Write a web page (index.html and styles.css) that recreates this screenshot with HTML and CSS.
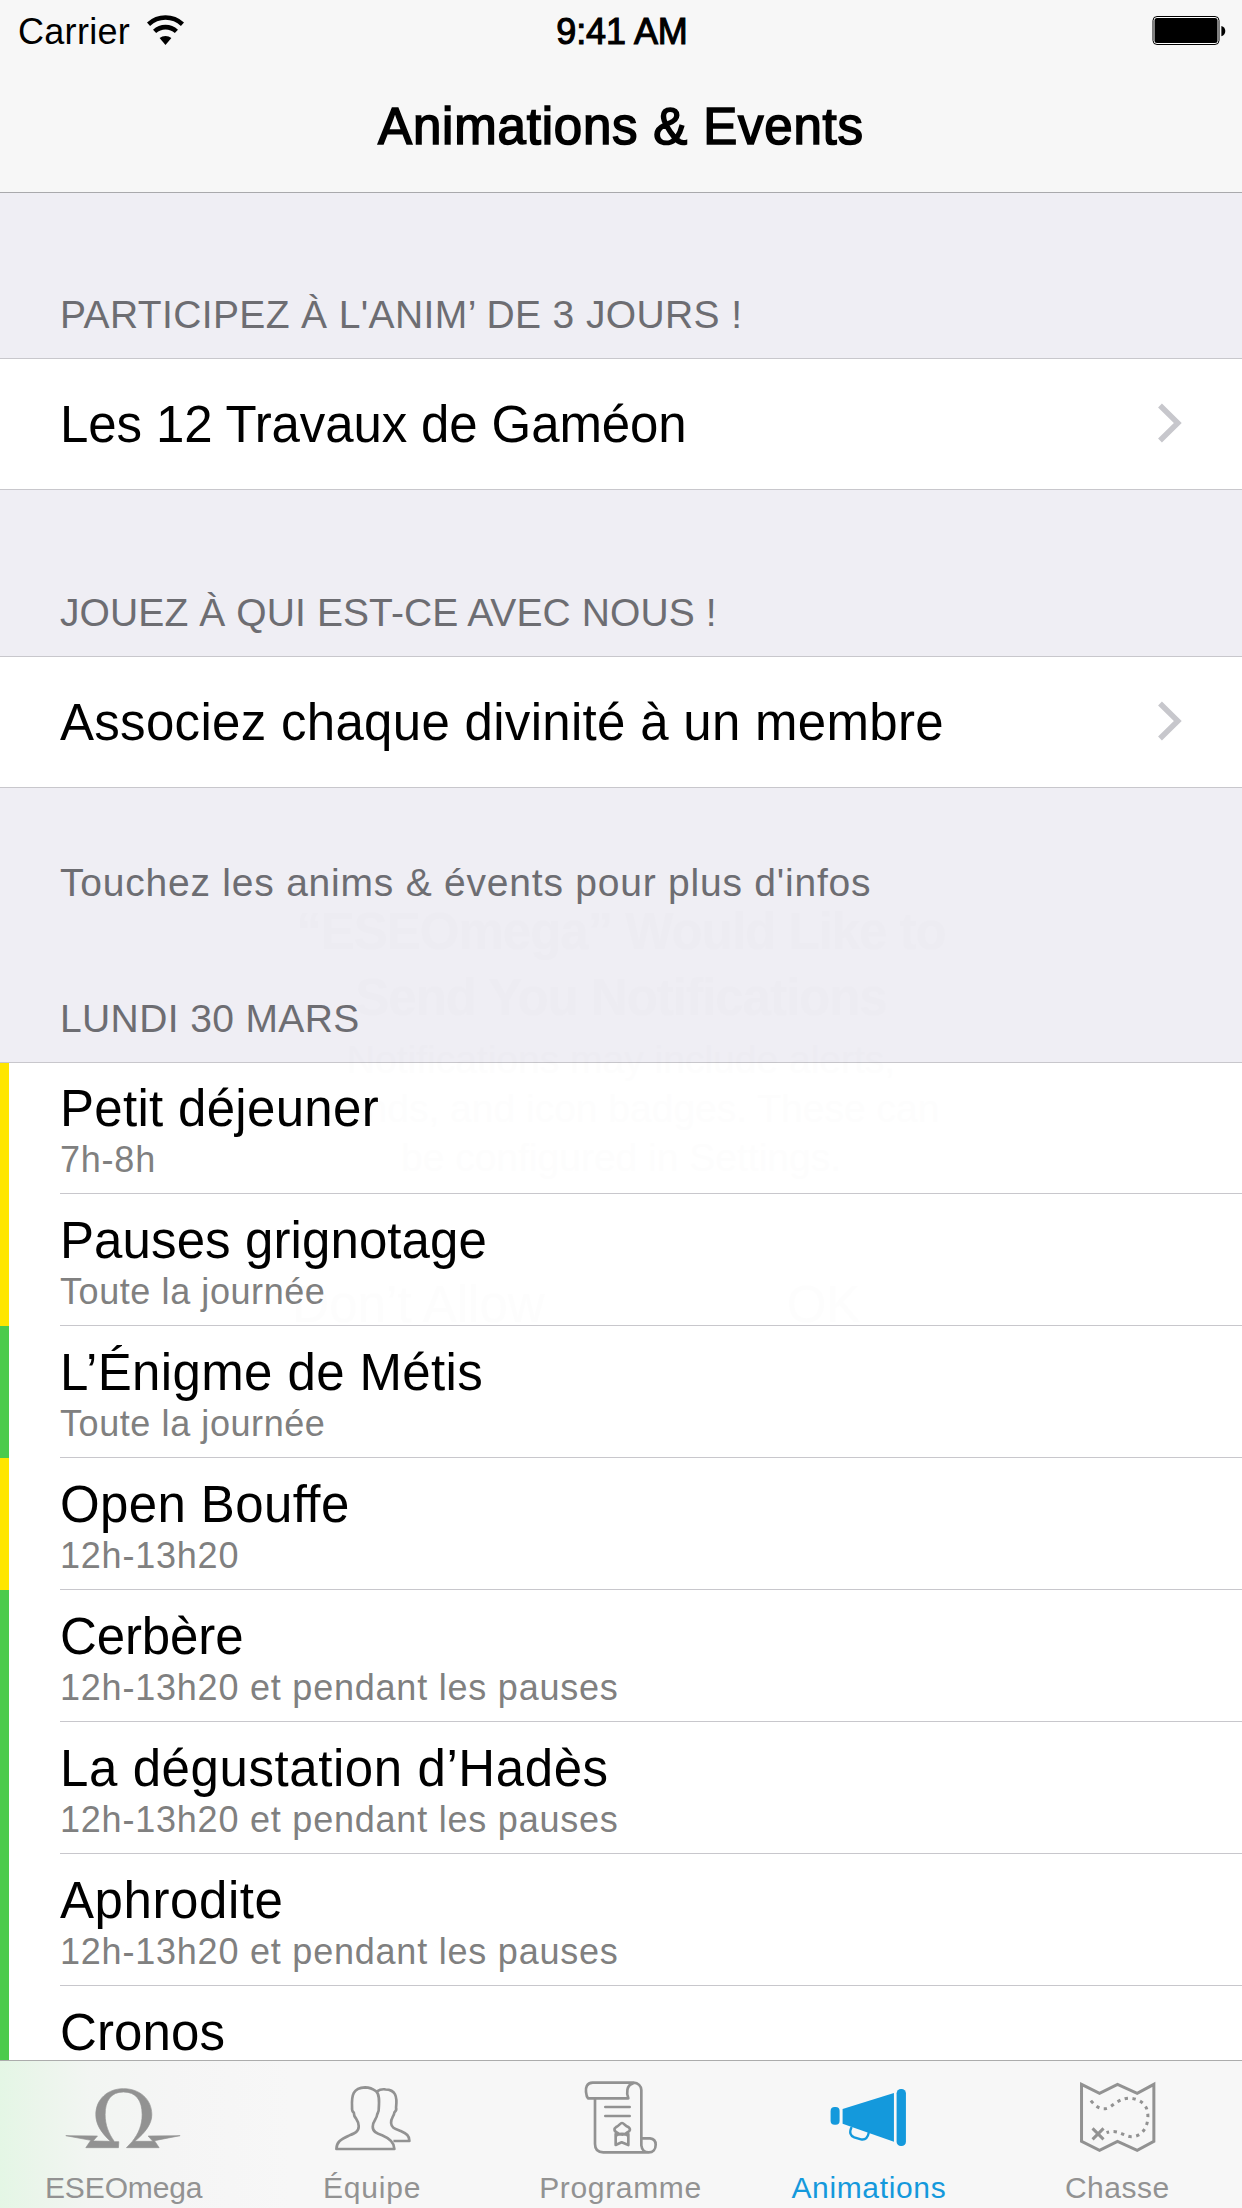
FILE: index.html
```html
<!DOCTYPE html>
<html lang="fr">
<head>
<meta charset="utf-8">
<title>Animations &amp; Events</title>
<link rel="stylesheet" href="styles.css">
</head>
<body>
<div class="screen">
  <header class="nav">
    <div class="status">
      <div class="status-left">
        <span class="carrier">Carrier</span>
        <svg class="wifi" viewBox="0 0 37 32" width="37" height="32" fill="none" stroke="#000">
          <path d="M1.5 10.2A25 25 0 0 1 35.5 10.2" stroke-width="4.6"/>
          <path d="M7.6 17.4A16 16 0 0 1 29.4 17.4" stroke-width="4.6"/>
          <path d="M12.6 24.1A9 9 0 0 1 24.4 24.1L18.5 31Z" fill="#000" stroke="none"/>
        </svg>
      </div>
      <span class="clock">9:41 AM</span>
      <div class="status-right">
        <svg class="battery" viewBox="0 0 74 30" width="74" height="30">
          <rect x="1" y=".5" width="66" height="28" rx="4" fill="#fff" stroke="#000" stroke-width="1"/>
          <rect x="2.500" y="2" width="63" height="25" rx="2.500" fill="#000"/>
          <path d="M69.4 10c5.2 1 5.2 9.200 0 10.200z" fill="#000"/>
        </svg>
      </div>
    </div>
    <h1 class="nav-title">Animations &amp; Events</h1>
  </header>

  <main class="table">
    <h2 class="section-title s-first track-35">PARTICIPEZ À L'ANIM’ DE 3 JOURS !</h2>
    <div class="link-row">
      <span class="link-label track-n">Les 12 Travaux de Gaméon</span>
      <svg class="chevron" viewBox="0 0 24 40" width="24" height="40" fill="none" stroke="#c7c7cc" stroke-width="5.500"><path d="M2 2.500 19.800 20 2 37.500"/></svg>
    </div>
    <h2 class="section-title track-10">JOUEZ À QUI EST-CE AVEC NOUS !</h2>
    <div class="link-row">
      <span class="link-label track-30">Associez chaque divinité à un membre</span>
      <svg class="chevron" viewBox="0 0 24 40" width="24" height="40" fill="none" stroke="#c7c7cc" stroke-width="5.500"><path d="M2 2.500 19.800 20 2 37.500"/></svg>
    </div>
    <p class="section-note track-75">Touchez les anims &amp; évents pour plus d'infos</p>
    <h2 class="section-title s-day track-35">LUNDI 30 MARS</h2>

    <ul class="events">
      <li class="event food"><div class="event-body"><span class="event-name track-30">Petit déjeuner</span><span class="event-time track-75">7h-8h</span></div></li>
      <li class="event food"><div class="event-body"><span class="event-name track-10">Pauses grignotage</span><span class="event-time track-55">Toute la journée</span></div></li>
      <li class="event game"><div class="event-body"><span class="event-name track-35">L’Énigme de Métis</span><span class="event-time track-55">Toute la journée</span></div></li>
      <li class="event food"><div class="event-body"><span class="event-name track-35">Open Bouffe</span><span class="event-time track-75">12h-13h20</span></div></li>
      <li class="event game"><div class="event-body"><span class="event-name track-n">Cerbère</span><span class="event-time track-75">12h-13h20 et pendant les pauses</span></div></li>
      <li class="event game"><div class="event-body"><span class="event-name track-55">La dégustation d’Hadès</span><span class="event-time track-75">12h-13h20 et pendant les pauses</span></div></li>
      <li class="event game"><div class="event-body"><span class="event-name track-55">Aphrodite</span><span class="event-time track-75">12h-13h20 et pendant les pauses</span></div></li>
      <li class="event game"><div class="event-body"><span class="event-name track-10">Cronos</span></div></li>
    </ul>
  </main>

  <nav class="tabs">
    <a class="tab">
      <svg class="icon" viewBox="192.600 81 360 240" fill="#929292" stroke="#929292" stroke-width="2">
        <path d="M198 257 293 258 280 273 332 274C303 247 288 222 288 194C288 147 324 116 371 116C419 116 456 147 456 194C456 222 437 247 405 274L459 274 445 258 541 257 464 272 478 293 380 293 397 275C417 250 427 224 427 194C427 151 409 126 371 126C334 126 316 151 316 194C316 224 326 250 344 275L357 275 356 293 258 293 273 271Z"/>
      </svg>
      <span class="track-n">ESEOmega</span>
    </a>
    <a class="tab">
      <svg class="icon" viewBox="937.800 81 360 240" fill="none" stroke="#929292" stroke-width="8" stroke-linejoin="round">
        <path d="M1008 297C1008 277 1020 268 1045 257C1064 249 1075 245 1075 229C1075 214 1069 210 1062 198L1060 187C1056 185 1054 181 1055 172C1053 136 1058 113 1094 112C1109 112 1117 116 1127 124C1137 132 1137 150 1135 177C1136 185 1131 188 1130 195C1129 208 1117 212 1117 230C1117 245 1129 250 1145 256C1169 266 1182 277 1182 297Z"/>
        <path d="M1130 124C1138 118 1146 117 1155 118C1185 119 1191 138 1187 173C1189 180 1186 184 1182 187C1181 199 1171 203 1172 219C1173 235 1185 237 1201 243C1219 251 1227 257 1227 273L1179 273"/>
      </svg>
      <span class="track-75">Équipe</span>
    </a>
    <a class="tab">
      <svg class="icon" viewBox="423 81 360 240" fill="none" stroke="#929292" stroke-width="8" stroke-linecap="round" stroke-linejoin="round">
        <path d="M518 98H641C654 98 664 108 664 120V286C666 301 676 307 686 307H550C533 307 525 298 525 282V146M664 265H690C702 266 707 274 707 284C707 298 699 307 686 307M518 98C499 99 497 113 498 125C499 136 499 140 504 145H625C619 131 619 105 639 100"/>
        <path d="M556 171H629M556 198H629M587 252V285L605 277 625 285V252M591 255C599 250 613 250 621 255M590 230C597 227 601 219 606 219C611 219 616 227 623 230C634 237 630 244 622 247C614 256 600 256 592 248C581 244 581 236 590 230Z"/>
      </svg>
      <span class="track-65">Programme</span>
    </a>
    <a class="tab active">
      <svg class="icon" viewBox="-37.800 81 360 240" fill="#1499dc">
        <rect x="27" y="171" width="27" height="53" rx="12"/>
        <rect x="225" y="117" width="28" height="171" rx="13"/>
        <path d="M63 177 217 129V275L63 221Z"/>
        <path d="M90 231C82 248 86 257 98 262L118 268C132 271 139 263 142 246" fill="none" stroke="#1499dc" stroke-width="7"/>
      </svg>
      <span class="track-65">Animations</span>
    </a>
    <a class="tab">
      <svg class="icon" viewBox="707.400 81 360 240" fill="none" stroke="#929292" stroke-width="9">
        <path d="M778 103 832 130 886 103 945 130 995 103V274L945 301 886 274 832 301 778 274Z"/>
        <path d="M806 152C824 174 843 184 865 170C888 153 909 137 941 148C970 158 978 177 977 204C975 238 954 261 927 260C904 259 889 236 853 248" stroke-dasharray="10 13.500"/>
        <path d="M811 235 844 268M844 235 811 268"/>
      </svg>
      <span class="track-50">Chasse</span>
    </a>
  </nav>

  <div class="alert-ghost">
    <p class="ghost-title">“ESEOmega” Would Like to<br>Send You Notifications</p>
    <p class="ghost-text">Notifications may include alerts,<br>sounds, and icon badges. These can<br>be configured in Settings.</p>
    <div class="ghost-actions"><span>Don’t Allow</span><span>OK</span></div>
  </div>
</div>
</body>
</html>
```
FILE: styles.css
```css
* { box-sizing: border-box; margin: 0; padding: 0; }

body {
  background: #efeef4;
  font-family: "Liberation Sans", Arial, sans-serif;
  color: #000;
}

.screen {
  position: relative;
  display: flex;
  flex-direction: column;
  width: 1242px;
  height: 2208px;
  overflow: hidden;
}

/* letter spacing steps */
.track-n { letter-spacing: -.12px; }
.track-10 { letter-spacing: .1px; }
.track-30 { letter-spacing: .3px; }
.track-35 { letter-spacing: .38px; }
.track-50 { letter-spacing: .5px; }
.track-55 { letter-spacing: .58px; }
.track-65 { letter-spacing: .66px; }
.track-75 { letter-spacing: .78px; }

/* navigation bar */
.nav {
  flex: none;
  height: 193px;
  background: #f7f7f7;
  border-bottom: 1px solid #a9a9ac;
}
.status {
  display: grid;
  grid-template-columns: 1fr auto 1fr;
  height: 60px;
  padding: 0 16px 0 18px;
  font-size: 36px;
  line-height: 64px;
}
.status-left { display: flex; gap: 17px; }
.carrier { letter-spacing: .3px; }
.wifi { margin-top: 14px; }
.clock { -webkit-text-stroke: 1.1px #000; letter-spacing: -.1px; }
.status-right { display: flex; justify-content: flex-end; }
.battery { margin-top: 16px; }
.nav-title {
  font-size: 51px;
  font-weight: 400;
  line-height: 60px;
  padding-top: 37px;
  letter-spacing: .8px;
  text-align: center;
  -webkit-text-stroke: 1.6px #000;
}

/* grouped table */
.table { flex: 1; min-height: 0; overflow: hidden; }
.section-title, .section-note {
  padding-left: 60px;
  font-size: 39px;
  font-weight: 400;
  line-height: 48px;
  color: #6d6d72;
}
.section-title { height: 166px; padding-top: 99px; }
.s-first { height: 165px; padding-top: 98px; }
.section-note { height: 160px; padding-top: 71px; }
.s-day { height: 114px; padding-top: 47px; }
.link-row {
  display: flex;
  align-items: center;
  justify-content: space-between;
  height: 132px;
  padding: 0 60px;
  background: #fff;
  border-top: 1px solid #c8c7cc;
  border-bottom: 1px solid #c8c7cc;
}
.link-label { font-size: 51px; line-height: 60px; padding-top: 2px; }
.chevron { margin-top: -3px; }

.events { list-style: none; border-top: 1px solid #c8c7cc; background: #fff; }
.event { display: flex; height: 132px; }
.event:first-child { height: 131px; }
.event::before { content: ""; flex: none; width: 9px; }
.food::before { background: #ffe600; }
.game::before { background: #4ccb4c; }
.event-body {
  display: flex;
  flex: 1;
  flex-direction: column;
  justify-content: flex-start;
  margin-left: 51px;
  padding-top: 17px;
  border-bottom: 1px solid #c8c7cc;
}
.event:first-child .event-body { padding-top: 16px; }
.event-name { font-size: 51px; line-height: 60px; }
.event-time { font-size: 36px; line-height: 44px; margin-top: -1px; color: #808080; }

/* tab bar */
.tabs {
  flex: none;
  display: grid;
  grid-template-columns: repeat(5, 1fr);
  height: 148px;
  border-top: 1px solid #acacac;
  background: linear-gradient(90deg, #e4f6e5 0, #ebf5eb 40px, #f2f5f2 90px, #f5f5f5 170px, #f7f7f7 290px);
}
.tab {
  display: flex;
  flex-direction: column;
  align-items: center;
  padding-top: 16px;
  font-size: 30px;
  line-height: 36px;
  color: #929292;
}
.tab.active { color: #1499dc; }
.tab span { margin-right: 1px; }
.icon { width: 120px; height: 80px; margin-bottom: 13px; }

/* dismissed permission dialog, last step of its fade-out */
.alert-ghost {
  position: absolute;
  left: 216px;
  top: 899px;
  width: 810px;
  text-align: center;
  color: #000;
  opacity: .004;
  pointer-events: none;
}
.ghost-title { font-size: 51px; line-height: 66px; font-weight: 700; letter-spacing: -1px; }
.ghost-text { font-size: 39px; line-height: 49px; margin-top: 4px; }
.ghost-actions { display: grid; grid-template-columns: 1fr 1fr; margin-top: 83px; font-size: 51px; line-height: 80px; }
```
